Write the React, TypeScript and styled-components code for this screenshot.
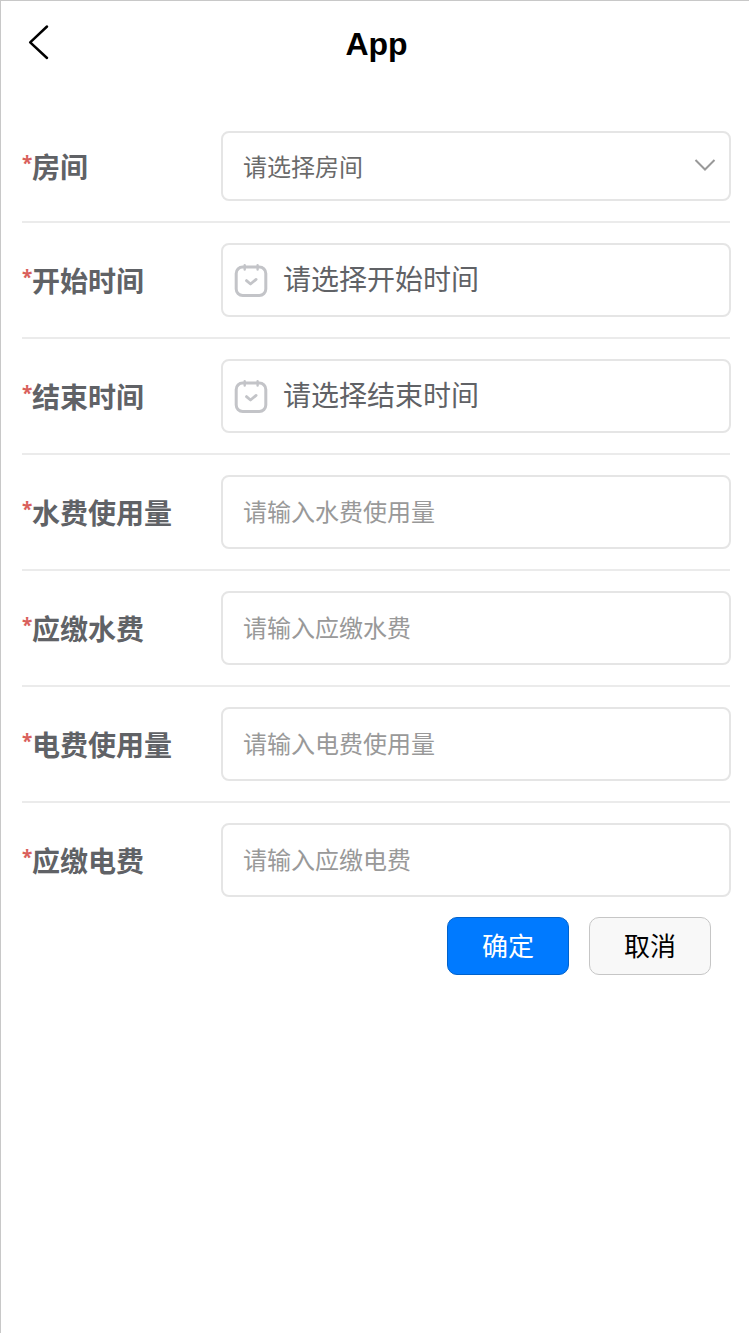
import React from "react";
import styled, { createGlobalStyle } from "styled-components";

const GlobalStyle = createGlobalStyle`
  * { box-sizing: border-box; }
  body { margin: 0; background: #fff; font-family: "Liberation Sans", "Noto Sans CJK SC", sans-serif; }
`;

const Page = styled.div`
  height: 1333px;
  border-left: 1px solid #c8c8c8;
  border-top: 1px solid #c8c8c8;
  background: #fff;
  overflow: hidden;
`;

const NavBar = styled.header`
  display: grid;
  grid-template-columns: 80px 1fr 80px;
  align-items: center;
  height: 88px;
`;

const BackButton = styled.button`
  display: flex;
  width: 60px;
  height: 60px;
  margin-left: 10px;
  padding: 0;
  border: 0;
  background: none;
`;

const Title = styled.h1`
  margin: 0;
  padding: 0 0 2px 3px;
  font-size: 32px;
  line-height: 44px;
  font-weight: 700;
  text-align: center;
  color: #000;
`;

const Form = styled.form`
  padding: 22px 18px 0 21px;
`;

const Row = styled.div<{ $last?: boolean }>`
  display: flex;
  align-items: center;
  padding: 20px 0;
  margin-right: 1px;
  border-bottom: ${(p) => (p.$last ? "0" : "2px solid #ebebeb")};
`;

const Label = styled.label`
  display: flex;
  flex: 0 0 199px;
  padding-top: 5px;
  font-size: 28px;
  line-height: 40px;
  font-weight: 700;
  color: #606266;
`;

const Star = styled.span`
  width: 10px;
  font-family: "Noto Sans", sans-serif;
  font-size: 19px;
  font-weight: 700;
  line-height: 28px;
  color: #d9605c;
`;

const Field = styled.div<{ $height?: number }>`
  display: flex;
  flex: 1;
  align-items: center;
  height: ${(p) => p.$height ?? 74}px;
  margin-right: -1px;
  border: 2px solid #e5e5e5;
  border-radius: 8px;
  background: #fff;
`;

const Selected = styled.span`
  flex: 1;
  padding: 4px 0 0 20px;
  font-size: 24px;
  line-height: 34px;
  color: #6a6a6a;
`;

const DateText = styled.span`
  padding: 2px 0 0 14px;
  font-size: 28px;
  line-height: 40px;
  color: #606266;
`;

const Input = styled.input`
  width: 100%;
  height: 70px;
  padding: 2px 20px 0;
  border: 0;
  outline: 0;
  background: transparent;
  font-family: inherit;
  font-size: 24px;
  color: #333;
  &::placeholder { color: #999; opacity: 1; }
`;

const Arrow = styled.svg`
  flex: none;
  margin-right: 12px;
`;

const CalendarSvg = styled.svg`
  flex: none;
  margin-left: 10px;
`;

const Actions = styled.div`
  display: flex;
  justify-content: flex-end;
  gap: 20px;
  padding-right: 20px;
`;

const Button = styled.button<{ $primary?: boolean }>`
  width: 122px;
  height: 58px;
  padding: 2px 0 0;
  border: 1px solid ${(p) => (p.$primary ? "#0062cc" : "#c6c6c6")};
  border-radius: 10px;
  background: ${(p) => (p.$primary ? "#007aff" : "#f8f8f8")};
  color: ${(p) => (p.$primary ? "#fff" : "#000")};
  font-family: inherit;
  font-size: 26px;
  line-height: 54px;
`;

const Calendar = () => (
  <CalendarSvg width="36" height="36" viewBox="0 0 36 36" fill="none" stroke="#c3c4c8" strokeLinecap="round" strokeLinejoin="round">
    <rect x="3.2" y="5" width="29.6" height="28.5" rx="6.5" strokeWidth="3" />
    <path d="M11.7 3.2v4.4M24.6 3.2v4.4" strokeWidth="2.4" />
    <path d="M13.5 18.6l4 3.4 5.6-4.6" strokeWidth="2.8" />
  </CalendarSvg>
);

const dates = [
  { label: "开始时间", hint: "请选择开始时间" },
  { label: "结束时间", hint: "请选择结束时间" },
];

const inputs = ["水费使用量", "应缴水费", "电费使用量", "应缴电费"];

export default function App() {
  return (
    <>
      <GlobalStyle />
      <Page>
        <NavBar>
          <BackButton aria-label="返回">
            <svg width="60" height="60" viewBox="0 0 60 60" fill="none" stroke="#000" strokeWidth="2.5" strokeLinecap="round" strokeLinejoin="round">
              <path d="M36 11.5L19.2 27.3L36 43" />
            </svg>
          </BackButton>
          <Title>App</Title>
        </NavBar>
        <Form>
          <Row>
            <Label><Star>*</Star>房间</Label>
            <Field $height={70}>
              <Selected>请选择房间</Selected>
              <Arrow width="24" height="24" viewBox="0 0 24 24" fill="none" stroke="#999" strokeWidth="2">
                <path d="M2.5 6L12 15.5L21.5 6" />
              </Arrow>
            </Field>
          </Row>
          {dates.map((d) => (
            <Row key={d.label}>
              <Label><Star>*</Star>{d.label}</Label>
              <Field>
                <Calendar />
                <DateText>{d.hint}</DateText>
              </Field>
            </Row>
          ))}
          {inputs.map((name, i) => (
            <Row key={name} $last={i === inputs.length - 1}>
              <Label><Star>*</Star>{name}</Label>
              <Field>
                <Input placeholder={`请输入${name}`} />
              </Field>
            </Row>
          ))}
          <Actions>
            <Button type="button" $primary>确定</Button>
            <Button type="button">取消</Button>
          </Actions>
        </Form>
      </Page>
    </>
  );
}
